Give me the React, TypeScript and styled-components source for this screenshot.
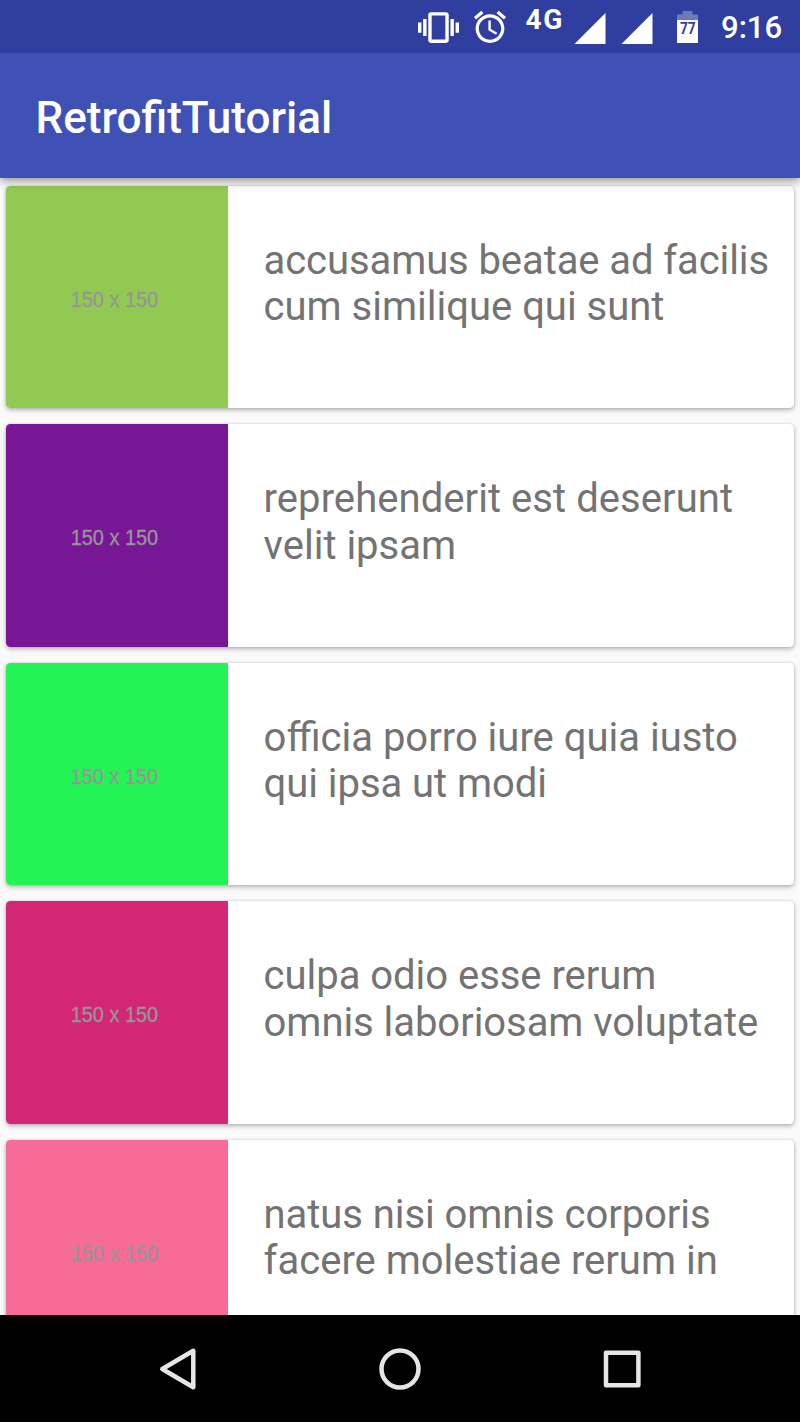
import React from "react";
import styled, { createGlobalStyle } from "styled-components";

const GlobalStyle = createGlobalStyle`
  *, *::before, *::after { box-sizing: border-box; }
  body {
    margin: 0;
    background: #fafafa;
    font-family: Roboto, sans-serif;
    overflow: hidden;
  }
`;

const Screen = styled.div`
  display: flex;
  flex-direction: column;
  width: 800px;
  height: 1422px;
  overflow: hidden;
  background: #fafafa;
`;

const StatusBar = styled.header`
  display: flex;
  flex: none;
  align-items: flex-start;
  justify-content: flex-end;
  height: 53.33px;
  padding-right: 18px;
  background: #303f9f;
  color: #fff;
  position: relative;
  z-index: 2;
`;

const StatusIcon = styled.svg<{ $top: number; $gap: number }>`
  display: block;
  flex: none;
  margin-top: ${(p) => p.$top}px;
  margin-right: ${(p) => p.$gap}px;
  fill: #fff;
  overflow: visible;
`;

const NetworkLabel = styled.span`
  width: 38px;
  margin-top: 5px;
  margin-right: 10.5px;
  font-size: 28px;
  font-weight: 700;
  line-height: 30px;
  letter-spacing: 1.6px;
  white-space: nowrap;
`;

const BatteryText = styled.text`
  fill: #303f9f;
  font-size: 17px;
  font-weight: 700;
`;

const Clock = styled.time`
  width: 61px;
  margin-top: 10px;
  font-size: 31.1px;
  font-weight: 500;
  line-height: 36px;
  white-space: nowrap;
`;

const Toolbar = styled.div`
  display: flex;
  flex: none;
  align-items: center;
  height: 124.67px;
  padding: 5px 35.6px 0;
  background: #3f51b5;
  box-shadow: 0 3px 9px rgba(0, 0, 0, 0.42);
  position: relative;
  z-index: 1;
`;

const Title = styled.h1`
  margin: 0;
  color: #fff;
  font-size: 44px;
  font-weight: 500;
  line-height: 52px;
`;

const List = styled.main`
  display: flex;
  flex: 1;
  flex-direction: column;
  gap: 16.3px;
  min-height: 0;
  padding: 7.9px 6px 0;
  overflow: hidden;
`;

const Card = styled.article`
  display: flex;
  flex: none;
  height: 222.2px;
  border-radius: 4.4px;
  background: #fff;
  box-shadow: 0 2px 5px rgba(0, 0, 0, 0.28), 0 0 2px rgba(0, 0, 0, 0.16);
`;

const Thumbnail = styled.div<{ $color: string }>`
  display: flex;
  flex: none;
  align-items: center;
  justify-content: center;
  width: 222px;
  padding: 6px 5px 0 0;
  border-radius: 4.4px 0 0 4.4px;
  background: ${(p) => p.$color};
`;

const ThumbnailSize = styled.span`
  color: #969696;
  font-family: "Liberation Sans", Arial, sans-serif;
  font-size: 22.5px;
  line-height: 26px;
  white-space: nowrap;
  transform: scaleX(0.885);
  -webkit-text-stroke: 0.35px #969696;
`;

const Description = styled.p`
  flex: 1;
  margin: 0;
  padding: 52px 0 0 35.6px;
  color: #737373;
  font-size: 40px;
  line-height: 46.4px;
  white-space: nowrap;
`;

const Line = styled.span<{ $tracking?: number }>`
  display: block;
  letter-spacing: ${(p) => (p.$tracking ? `${p.$tracking}px` : "normal")};
`;

const NavigationBar = styled.nav`
  display: flex;
  flex: none;
  align-items: center;
  justify-content: center;
  gap: 178px;
  height: 106.67px;
  background: #000;
  position: relative;
  z-index: 1;
`;

const NavIcon = styled.svg`
  display: block;
  width: 44px;
  height: 44px;
  fill: none;
  stroke: #e6e6e6;
  stroke-width: 4.5;
  stroke-linejoin: round;
`;

const photos = [
  {
    color: "#92c952",
    lines: [{ text: "accusamus beatae ad facilis", tracking: -0.09 }, { text: "cum similique qui sunt" }],
  },
  {
    color: "#771796",
    lines: [{ text: "reprehenderit est deserunt", tracking: 0.06 }, { text: "velit ipsam" }],
  },
  {
    color: "#24f355",
    lines: [{ text: "officia porro iure quia iusto" }, { text: "qui ipsa ut modi", tracking: -0.05 }],
  },
  {
    color: "#d32776",
    lines: [{ text: "culpa odio esse rerum", tracking: -0.03 }, { text: "omnis laboriosam voluptate", tracking: -0.05 }],
  },
  {
    color: "#f66b97",
    lines: [{ text: "natus nisi omnis corporis", tracking: -0.06 }, { text: "facere molestiae rerum in" }],
  },
];

const VibrateIcon = () => (
  <StatusIcon $top={6.5} $gap={14.5} width="41" height="41" viewBox="0 0 24 24">
    <path d="M0 15h2V9H0v6zm3 2h2V7H3v10zm19-8v6h2V9h-2zm-3 8h2V7h-2v10zM16.5 3h-9C6.67 3 6 3.67 6 4.5v15c0 .83.67 1.5 1.5 1.5h9c.83 0 1.5-.67 1.5-1.5v-15c0-.83-.67-1.5-1.5-1.5zM16 19H8V5h8v14z" />
  </StatusIcon>
);

const AlarmIcon = () => (
  <StatusIcon $top={11} $gap={20} width="32" height="32" viewBox="2 2 20 20">
    <path d="M22 5.72l-4.6-3.86-1.29 1.53 4.6 3.86L22 5.72zM7.88 3.39L6.6 1.86 2 5.71l1.29 1.53 4.59-3.85zM12.5 8H11v6l4.75 2.85.75-1.23-4-2.37V8zM12 4c-4.97 0-9 4.03-9 9s4.02 9 9 9c4.97 0 9-4.03 9-9s-4.03-9-9-9zm0 16c-3.87 0-7-3.13-7-7s3.13-7 7-7 7 3.13 7 7-3.13 7-7 7z" />
  </StatusIcon>
);

const SignalIcon = ({ gap }: { gap: number }) => (
  <StatusIcon $top={12.5} $gap={gap} width="31.5" height="31.5" viewBox="0 0 31.5 31.5">
    <path d="M0.5 31L31.5 0v31z" />
  </StatusIcon>
);

const BatteryIcon = () => (
  <StatusIcon $top={11} $gap={23} width="21" height="32" viewBox="0 0 21 32">
    <path d="M0 9V3.5h5.5V0h10v3.5H21V9z" fillOpacity="0.3" />
    <path d="M0 9h21v23H0z" />
    <BatteryText x="3" y="22.6" textLength="15.6" lengthAdjust="spacingAndGlyphs">
      77
    </BatteryText>
  </StatusIcon>
);

export default function App() {
  return (
    <>
      <GlobalStyle />
      <Screen>
        <StatusBar>
          <VibrateIcon />
          <AlarmIcon />
          <NetworkLabel>4G</NetworkLabel>
          <SignalIcon gap={15} />
          <SignalIcon gap={25} />
          <BatteryIcon />
          <Clock>9:16</Clock>
        </StatusBar>
        <Toolbar>
          <Title>RetrofitTutorial</Title>
        </Toolbar>
        <List>
          {photos.map((photo) => (
            <Card key={photo.color}>
              <Thumbnail $color={photo.color}>
                <ThumbnailSize>150 x 150</ThumbnailSize>
              </Thumbnail>
              <Description>
                {photo.lines.map((line) => (
                  <Line key={line.text} $tracking={line.tracking}>
                    {line.text}
                  </Line>
                ))}
              </Description>
            </Card>
          ))}
        </List>
        <NavigationBar>
          <NavIcon viewBox="0 0 44 44">
            <path d="M6.3 22L37.3 3.8v36.4z" />
          </NavIcon>
          <NavIcon viewBox="0 0 44 44">
            <circle cx="22" cy="22" r="18.5" />
          </NavIcon>
          <NavIcon viewBox="0 0 44 44">
            <rect x="6" y="5.8" width="32.4" height="32.4" />
          </NavIcon>
        </NavigationBar>
      </Screen>
    </>
  );
}
